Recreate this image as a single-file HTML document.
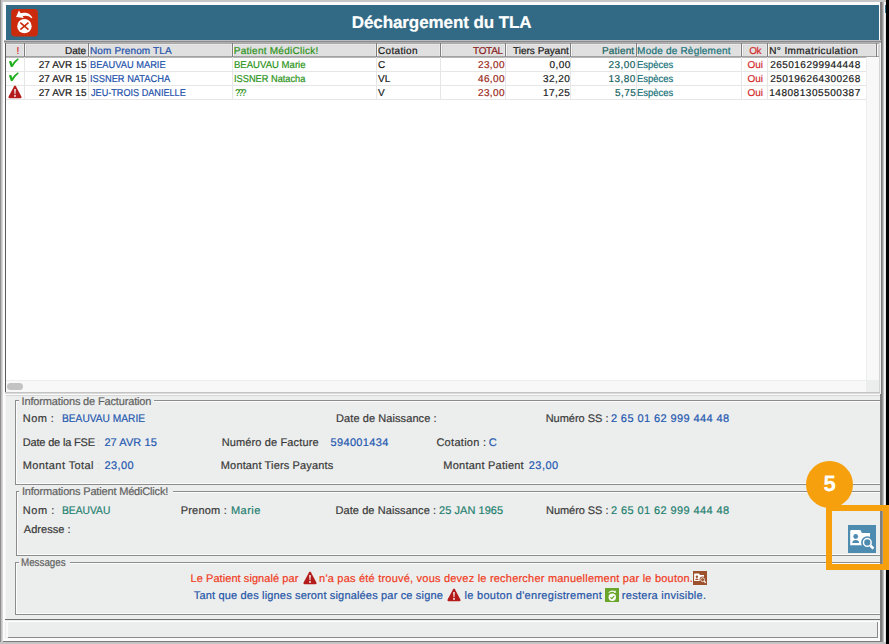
<!DOCTYPE html>
<html><head><meta charset="utf-8">
<style>
*{margin:0;padding:0;box-sizing:border-box}
html,body{width:889px;height:644px;overflow:hidden;background:#000}
body{position:relative;font-family:"Liberation Sans",sans-serif}
.a{position:absolute}
.t{position:absolute;white-space:pre;line-height:1;font-family:"Liberation Sans",sans-serif;-webkit-text-stroke:0.2px currentColor;text-rendering:geometricPrecision}
</style></head><body>
<!-- window frame -->
<div class="a" style="left:0;top:0;width:886px;height:644px;background:#c6c6c6"></div>
<div class="a" style="left:0;top:0;width:1px;height:644px;background:#8e8e8e"></div>
<div class="a" style="left:1px;top:0;width:1px;height:644px;background:#c2c2c2"></div>
<div class="a" style="left:2px;top:2px;width:883px;height:640px;background:#fbfbfb"></div>
<div class="a" style="left:2px;top:2px;width:1px;height:640px;background:#d6d6d6"></div>
<div class="a" style="left:880px;top:2px;width:1px;height:640px;background:#808080"></div>
<div class="a" style="left:881px;top:2px;width:1px;height:640px;background:#7c7c7c"></div>
<div class="a" style="left:882px;top:2px;width:1px;height:640px;background:#9a9a9a"></div>
<div class="a" style="left:883px;top:2px;width:1px;height:640px;background:#c0c0c0"></div>
<div class="a" style="left:884px;top:2px;width:1px;height:640px;background:#f4f4f4"></div>
<div class="a" style="left:885px;top:2px;width:1px;height:640px;background:#e4e4e4"></div>
<div class="a" style="left:885px;top:5px;width:1px;height:8px;background:#3a6f88"></div>
<!-- header -->
<div class="a" style="left:6px;top:5px;width:873px;height:35px;background:#326a85"></div>
<div class="a" style="left:4px;top:40px;width:877px;height:1px;background:#babec2"></div>
<div class="a" style="left:4px;top:41px;width:877px;height:1px;background:#8a8a8a"></div>
<div class="a" style="left:4px;top:42px;width:877px;height:1px;background:#b0b0b0"></div>
<!-- red icon -->
<svg class="a" style="left:10px;top:8px" width="30" height="30" viewBox="0 0 30 30">
 <rect x="1.2" y="0.9" width="26.7" height="27.5" rx="3.6" fill="#cb2a0c"/>
 <circle cx="14.45" cy="18.15" r="7.2" fill="#fff"/>
 <path d="M10.3 14.7 L18.5 21.7 M18.5 14.7 L10.3 21.7" stroke="#cb2a0c" stroke-width="1.6"/>
 <path d="M8.9 2.5 L6.1 8.9 L13.8 9.9 Z" fill="#fff"/>
 <path d="M9.8 5.6 C14 4.2 19.8 4.4 22.4 9.9 L21.6 10.3 C18.6 7.4 14.5 7.2 11.5 8.8 Z" fill="#fff"/>
</svg>
<!-- list box -->
<div class="a" style="left:5px;top:43px;width:875px;height:350px;background:#b8b8b8"></div>
<div class="a" style="left:5px;top:43px;width:1px;height:350px;background:#5a5a5a"></div>
<div class="a" style="left:6px;top:43px;width:873px;height:349px;background:#fff"></div>
<!-- table header -->
<div class="a" style="left:6px;top:43px;width:873px;height:1px;background:#a8a8a8"></div>
<div class="a" style="left:6px;top:44px;width:873px;height:1px;background:#eaeaea"></div>
<div class="a" style="left:6px;top:45px;width:873px;height:11px;background:#e0e0e0"></div>
<div class="a" style="left:6px;top:45px;width:873px;height:1px;background:#dcdcdc"></div>
<div class="a" style="left:6px;top:56px;width:873px;height:1px;background:#a2a2a2"></div>
<div class="a" style="left:6px;top:57px;width:873px;height:1px;background:#b8b8b8"></div>
<div class="a" style="left:24px;top:43px;width:1px;height:14px;background:#7e7e7e"></div>
<div class="a" style="left:25px;top:44px;width:1px;height:12px;background:#f8f8f8"></div>
<div class="a" style="left:26px;top:45px;width:1px;height:11px;background:#d4d4d4"></div>
<div class="a" style="left:23px;top:45px;width:1px;height:11px;background:#e8e8e8"></div>
<div class="a" style="left:88px;top:43px;width:1px;height:14px;background:#7e7e7e"></div>
<div class="a" style="left:89px;top:44px;width:1px;height:12px;background:#f8f8f8"></div>
<div class="a" style="left:90px;top:45px;width:1px;height:11px;background:#d4d4d4"></div>
<div class="a" style="left:87px;top:45px;width:1px;height:11px;background:#e8e8e8"></div>
<div class="a" style="left:232px;top:43px;width:1px;height:14px;background:#7e7e7e"></div>
<div class="a" style="left:233px;top:44px;width:1px;height:12px;background:#f8f8f8"></div>
<div class="a" style="left:234px;top:45px;width:1px;height:11px;background:#d4d4d4"></div>
<div class="a" style="left:231px;top:45px;width:1px;height:11px;background:#e8e8e8"></div>
<div class="a" style="left:376px;top:43px;width:1px;height:14px;background:#7e7e7e"></div>
<div class="a" style="left:377px;top:44px;width:1px;height:12px;background:#f8f8f8"></div>
<div class="a" style="left:378px;top:45px;width:1px;height:11px;background:#d4d4d4"></div>
<div class="a" style="left:375px;top:45px;width:1px;height:11px;background:#e8e8e8"></div>
<div class="a" style="left:440px;top:43px;width:1px;height:14px;background:#7e7e7e"></div>
<div class="a" style="left:441px;top:44px;width:1px;height:12px;background:#f8f8f8"></div>
<div class="a" style="left:442px;top:45px;width:1px;height:11px;background:#d4d4d4"></div>
<div class="a" style="left:439px;top:45px;width:1px;height:11px;background:#e8e8e8"></div>
<div class="a" style="left:505px;top:43px;width:1px;height:14px;background:#7e7e7e"></div>
<div class="a" style="left:506px;top:44px;width:1px;height:12px;background:#f8f8f8"></div>
<div class="a" style="left:507px;top:45px;width:1px;height:11px;background:#d4d4d4"></div>
<div class="a" style="left:504px;top:45px;width:1px;height:11px;background:#e8e8e8"></div>
<div class="a" style="left:570px;top:43px;width:1px;height:14px;background:#7e7e7e"></div>
<div class="a" style="left:571px;top:44px;width:1px;height:12px;background:#f8f8f8"></div>
<div class="a" style="left:572px;top:45px;width:1px;height:11px;background:#d4d4d4"></div>
<div class="a" style="left:569px;top:45px;width:1px;height:11px;background:#e8e8e8"></div>
<div class="a" style="left:636px;top:43px;width:1px;height:14px;background:#7e7e7e"></div>
<div class="a" style="left:637px;top:44px;width:1px;height:12px;background:#f8f8f8"></div>
<div class="a" style="left:638px;top:45px;width:1px;height:11px;background:#d4d4d4"></div>
<div class="a" style="left:635px;top:45px;width:1px;height:11px;background:#e8e8e8"></div>
<div class="a" style="left:741px;top:43px;width:1px;height:14px;background:#7e7e7e"></div>
<div class="a" style="left:742px;top:44px;width:1px;height:12px;background:#f8f8f8"></div>
<div class="a" style="left:743px;top:45px;width:1px;height:11px;background:#d4d4d4"></div>
<div class="a" style="left:740px;top:45px;width:1px;height:11px;background:#e8e8e8"></div>
<div class="a" style="left:767px;top:43px;width:1px;height:14px;background:#7e7e7e"></div>
<div class="a" style="left:768px;top:44px;width:1px;height:12px;background:#f8f8f8"></div>
<div class="a" style="left:769px;top:45px;width:1px;height:11px;background:#d4d4d4"></div>
<div class="a" style="left:766px;top:45px;width:1px;height:11px;background:#e8e8e8"></div>
<div class="a" style="left:876px;top:43px;width:1px;height:14px;background:#7e7e7e"></div>
<div class="a" style="left:877px;top:44px;width:1px;height:12px;background:#f8f8f8"></div>
<div class="a" style="left:878px;top:45px;width:1px;height:11px;background:#d4d4d4"></div>
<div class="a" style="left:875px;top:45px;width:1px;height:11px;background:#e8e8e8"></div>
<!-- rows separators -->
<div class="a" style="left:6px;top:71px;width:860px;height:1px;background:#e6e6e6"></div>
<div class="a" style="left:6px;top:85px;width:860px;height:1px;background:#e6e6e6"></div>
<div class="a" style="left:6px;top:99px;width:860px;height:1px;background:#e6e6e6"></div>
<div class="a" style="left:24px;top:57px;width:1px;height:43px;background:#e6e6e6"></div>
<div class="a" style="left:88px;top:57px;width:1px;height:43px;background:#e6e6e6"></div>
<div class="a" style="left:232px;top:57px;width:1px;height:43px;background:#e6e6e6"></div>
<div class="a" style="left:376px;top:57px;width:1px;height:43px;background:#e6e6e6"></div>
<div class="a" style="left:440px;top:57px;width:1px;height:43px;background:#e6e6e6"></div>
<div class="a" style="left:505px;top:57px;width:1px;height:43px;background:#e6e6e6"></div>
<div class="a" style="left:570px;top:57px;width:1px;height:43px;background:#e6e6e6"></div>
<div class="a" style="left:636px;top:57px;width:1px;height:43px;background:#e6e6e6"></div>
<div class="a" style="left:741px;top:57px;width:1px;height:43px;background:#e6e6e6"></div>
<div class="a" style="left:767px;top:57px;width:1px;height:43px;background:#e6e6e6"></div>
<!-- scroll tracks -->
<div class="a" style="left:866px;top:57px;width:13px;height:323px;background:#f8f8f8"></div>
<div class="a" style="left:866px;top:57px;width:1px;height:323px;background:#eceeed"></div>
<div class="a" style="left:6px;top:380px;width:860px;height:12px;background:#f8f8f8"></div>
<div class="a" style="left:6px;top:380px;width:860px;height:1px;background:#eceeed"></div>
<div class="a" style="left:866px;top:380px;width:13px;height:12px;background:#eceeed"></div>
<div class="a" style="left:7px;top:383px;width:15.5px;height:7px;border-radius:3.5px;background:#c3c3c3"></div>
<div class="a" style="left:879px;top:43px;width:1px;height:350px;background:#d4d4d4"></div>
<div class="a" style="left:880px;top:43px;width:1px;height:351px;background:#f0f0f0"></div>
<div class="a" style="left:5px;top:392px;width:875px;height:1px;background:#c4c4c4"></div>
<div class="a" style="left:5px;top:393px;width:875px;height:1px;background:#dadada"></div>
<!-- info panel -->
<div class="a" style="left:5px;top:395px;width:875px;height:225px;background:#eceeed"></div>
<div class="a" style="left:5px;top:395px;width:875px;height:1px;background:#d6d6d6"></div>
<div class="a" style="left:5px;top:395px;width:1px;height:225px;background:#f6f6f6"></div>
<div class="a" style="left:5px;top:619px;width:875px;height:1px;background:#737373"></div>
<div class="a" style="left:15px;top:400px;width:4px;height:1px;background:#8c8c8c"></div>
<div class="a" style="left:154px;top:400px;width:726px;height:1px;background:#8c8c8c"></div>
<div class="a" style="left:16px;top:401px;width:3px;height:1px;background:#fcfcfc"></div>
<div class="a" style="left:154px;top:401px;width:726px;height:1px;background:#fcfcfc"></div>
<div class="a" style="left:15px;top:400px;width:1px;height:85px;background:#8c8c8c"></div>
<div class="a" style="left:16px;top:401px;width:1px;height:83px;background:#fcfcfc"></div>
<div class="a" style="left:16px;top:483px;width:864px;height:1px;background:#fcfcfc"></div>
<div class="a" style="left:15px;top:484px;width:865px;height:1px;background:#8c8c8c"></div>
<div class="a" style="left:16px;top:491px;width:3px;height:1px;background:#8c8c8c"></div>
<div class="a" style="left:173px;top:491px;width:707px;height:1px;background:#8c8c8c"></div>
<div class="a" style="left:17px;top:492px;width:2px;height:1px;background:#fcfcfc"></div>
<div class="a" style="left:173px;top:492px;width:707px;height:1px;background:#fcfcfc"></div>
<div class="a" style="left:16px;top:491px;width:1px;height:65px;background:#8c8c8c"></div>
<div class="a" style="left:17px;top:492px;width:1px;height:63px;background:#fcfcfc"></div>
<div class="a" style="left:17px;top:554px;width:863px;height:1px;background:#fcfcfc"></div>
<div class="a" style="left:16px;top:555px;width:864px;height:1px;background:#8c8c8c"></div>
<div class="a" style="left:15px;top:562px;width:4px;height:1px;background:#8c8c8c"></div>
<div class="a" style="left:70px;top:562px;width:810px;height:1px;background:#8c8c8c"></div>
<div class="a" style="left:16px;top:563px;width:3px;height:1px;background:#fcfcfc"></div>
<div class="a" style="left:70px;top:563px;width:810px;height:1px;background:#fcfcfc"></div>
<div class="a" style="left:15px;top:562px;width:1px;height:53px;background:#8c8c8c"></div>
<div class="a" style="left:16px;top:563px;width:1px;height:51px;background:#fcfcfc"></div>
<div class="a" style="left:16px;top:613px;width:864px;height:1px;background:#fcfcfc"></div>
<div class="a" style="left:15px;top:614px;width:865px;height:1px;background:#8c8c8c"></div>
<!-- status bar -->
<div class="a" style="left:5px;top:620px;width:875px;height:21px;background:#eceeed"></div>
<div class="a" style="left:5px;top:621px;width:875px;height:1px;background:#fdfdfd"></div>
<div class="a" style="left:6px;top:621px;width:2px;height:16px;background:#fafafa"></div>
<div class="a" style="left:8px;top:637px;width:870px;height:1px;background:#8a8a8a"></div>
<div class="a" style="left:877px;top:622px;width:1px;height:16px;background:#8a8a8a"></div>
<div class="a" style="left:878px;top:621px;width:2px;height:20px;background:#fbfbfb"></div>
<div class="a" style="left:5px;top:638px;width:875px;height:3px;background:#fbfbfb"></div>
<div class="a" style="left:3px;top:641px;width:878px;height:1px;background:#7a7a7a"></div>
<div class="a" style="left:0;top:642px;width:886px;height:2px;background:#c4c4c4"></div>
<!-- icons in table -->
<svg class="a" style="left:8px;top:58px" width="12" height="10" viewBox="0 0 12 10"><path d="M0.9 3.5 Q2.3 2.6 3.5 3.2 L4.1 5.9 Q6.6 2.4 9.9 0.2 L10.8 1.3 Q7.4 4.3 4.8 8.8 L2.9 9.2 Z" fill="#1fb01f"/></svg>
<svg class="a" style="left:8px;top:72px" width="12" height="10" viewBox="0 0 12 10"><path d="M0.9 3.5 Q2.3 2.6 3.5 3.2 L4.1 5.9 Q6.6 2.4 9.9 0.2 L10.8 1.3 Q7.4 4.3 4.8 8.8 L2.9 9.2 Z" fill="#1fb01f"/></svg>
<svg class="a" style="left:8px;top:85px" width="14" height="14" viewBox="0 0 14 14"><path d="M6.1 1.2 Q7 -0.2 7.9 1.2 L13.4 11.4 Q14 13.2 12.3 13.2 L1.7 13.2 Q0 13.2 0.6 11.4 Z" fill="#b41b1b"/><path d="M6.2 4.3 Q7 3.8 7.8 4.3 L7.4 9.2 L6.6 9.2 Z" fill="#fff"/><circle cx="7" cy="10.9" r="0.95" fill="#fff"/></svg>
<!-- texts -->
<span class="t" style="top:46.53px;font-size:10px;color:#d42a2a;left:16.50px;">!</span>
<span class="t" style="top:46.53px;font-size:10px;color:#1a1a1a;left:65.00px;">Date</span>
<span class="t" style="top:46.53px;font-size:10px;color:#2251ab;letter-spacing:0.154px;left:89.90px;">Nom Prenom TLA</span>
<span class="t" style="top:46.53px;font-size:10px;color:#2c9419;letter-spacing:0.259px;left:233.80px;">Patient MédiClick!</span>
<span class="t" style="top:46.53px;font-size:10px;color:#1a1a1a;letter-spacing:0.300px;left:378.10px;">Cotation</span>
<span class="t" style="top:46.53px;font-size:10px;color:#8a1c1c;letter-spacing:-0.300px;left:473.00px;">TOTAL</span>
<span class="t" style="top:46.53px;font-size:10px;color:#1a1a1a;left:513.00px;">Tiers Payant</span>
<span class="t" style="top:46.53px;font-size:10px;color:#17625f;letter-spacing:0.167px;left:602.00px;">Patient</span>
<span class="t" style="top:46.53px;font-size:10px;color:#157078;letter-spacing:0.206px;left:637.10px;">Mode de Règlement</span>
<span class="t" style="top:46.53px;font-size:10px;color:#d42a2a;letter-spacing:-0.400px;left:749.20px;">Ok</span>
<span class="t" style="top:46.53px;font-size:10px;color:#1a1a1a;letter-spacing:0.400px;left:769.20px;">N° Immatriculation</span>
<span class="t" style="top:60.53px;font-size:10px;color:#1a1a1a;letter-spacing:0.088px;left:38.70px;">27 AVR 15</span>
<span class="t" style="top:60.53px;font-size:10px;color:#2251ab;transform:scaleX(0.9275);transform-origin:0 0;left:89.97px;">BEAUVAU MARIE</span>
<span class="t" style="top:60.53px;font-size:10px;color:#2c9419;transform:scaleX(0.9554);transform-origin:0 0;left:233.84px;">BEAUVAU Marie</span>
<span class="t" style="top:60.53px;font-size:10px;color:#1a1a1a;left:378.10px;">C</span>
<span class="t" style="top:60.53px;font-size:10px;color:#9a2818;letter-spacing:0.420px;left:477.92px;">23,00</span>
<span class="t" style="top:60.53px;font-size:10px;color:#1a1a1a;letter-spacing:0.420px;left:549.54px;">0,00</span>
<span class="t" style="top:60.53px;font-size:10px;color:#17625f;letter-spacing:0.420px;left:608.62px;">23,00</span>
<span class="t" style="top:60.53px;font-size:10px;color:#157078;transform:scaleX(0.9432);transform-origin:0 0;left:637.16px;">Espèces</span>
<span class="t" style="top:60.53px;font-size:10px;color:#d42a2a;left:747.50px;">Oui</span>
<span class="t" style="top:60.53px;font-size:10px;color:#1a1a1a;letter-spacing:0.471px;left:770.20px;">265016299944448</span>
<span class="t" style="top:74.53px;font-size:10px;color:#1a1a1a;letter-spacing:0.088px;left:38.70px;">27 AVR 15</span>
<span class="t" style="top:74.53px;font-size:10px;color:#2251ab;transform:scaleX(0.9279);transform-origin:0 0;left:89.97px;">ISSNER NATACHA</span>
<span class="t" style="top:74.53px;font-size:10px;color:#2c9419;transform:scaleX(0.9237);transform-origin:0 0;left:233.88px;">ISSNER Natacha</span>
<span class="t" style="top:74.53px;font-size:10px;color:#1a1a1a;left:378.10px;">VL</span>
<span class="t" style="top:74.53px;font-size:10px;color:#9a2818;letter-spacing:0.420px;left:477.92px;">46,00</span>
<span class="t" style="top:74.53px;font-size:10px;color:#1a1a1a;letter-spacing:0.420px;left:543.12px;">32,20</span>
<span class="t" style="top:74.53px;font-size:10px;color:#17625f;letter-spacing:0.420px;left:608.62px;">13,80</span>
<span class="t" style="top:74.53px;font-size:10px;color:#157078;transform:scaleX(0.9432);transform-origin:0 0;left:637.16px;">Espèces</span>
<span class="t" style="top:74.53px;font-size:10px;color:#d42a2a;left:747.50px;">Oui</span>
<span class="t" style="top:74.53px;font-size:10px;color:#1a1a1a;letter-spacing:0.471px;left:770.20px;">250196264300268</span>
<span class="t" style="top:88.53px;font-size:10px;color:#1a1a1a;letter-spacing:0.088px;left:38.70px;">27 AVR 15</span>
<span class="t" style="top:88.53px;font-size:10px;color:#2251ab;transform:scaleX(0.9115);transform-origin:0 0;left:90.90px;">JEU-TROIS DANIELLE</span>
<span class="t" style="top:88.53px;font-size:10px;color:#2c9419;letter-spacing:-1.920px;transform:scaleX(0.8800);transform-origin:0 0;left:234.80px;">???</span>
<span class="t" style="top:88.53px;font-size:10px;color:#1a1a1a;left:378.10px;">V</span>
<span class="t" style="top:88.53px;font-size:10px;color:#9a2818;letter-spacing:0.420px;left:477.92px;">23,00</span>
<span class="t" style="top:88.53px;font-size:10px;color:#1a1a1a;letter-spacing:0.420px;left:543.12px;">17,25</span>
<span class="t" style="top:88.53px;font-size:10px;color:#17625f;letter-spacing:0.420px;left:615.04px;">5,75</span>
<span class="t" style="top:88.53px;font-size:10px;color:#157078;transform:scaleX(0.9432);transform-origin:0 0;left:637.16px;">Espèces</span>
<span class="t" style="top:88.53px;font-size:10px;color:#d42a2a;left:747.50px;">Oui</span>
<span class="t" style="top:88.53px;font-size:10px;color:#1a1a1a;letter-spacing:0.543px;left:769.20px;">148081305500387</span>
<span class="t" style="top:396.69px;font-size:11px;color:#626262;letter-spacing:-0.158px;left:21.60px;">Informations de Facturation</span>
<span class="t" style="top:413.69px;font-size:11px;color:#3a3a3a;letter-spacing:0.425px;left:22.80px;">Nom :</span>
<span class="t" style="top:413.69px;font-size:11px;color:#2458b0;transform:scaleX(0.9261);transform-origin:0 0;left:62.47px;">BEAUVAU MARIE</span>
<span class="t" style="top:413.69px;font-size:11px;color:#3a3a3a;letter-spacing:0.078px;left:336.10px;">Date de Naissance :</span>
<span class="t" style="top:413.69px;font-size:11px;color:#3a3a3a;letter-spacing:-0.020px;left:545.70px;">Numéro SS :</span>
<span class="t" style="top:413.69px;font-size:11px;color:#2458b0;letter-spacing:0.405px;left:610.90px;">2 65 01 62 999 444 48</span>
<span class="t" style="top:437.69px;font-size:11px;color:#3a3a3a;letter-spacing:-0.169px;left:22.70px;">Date de la FSE</span>
<span class="t" style="top:437.69px;font-size:11px;color:#e6dccb;left:97.00px;">:</span>
<span class="t" style="top:437.69px;font-size:11px;color:#2458b0;letter-spacing:0.075px;left:104.40px;">27 AVR 15</span>
<span class="t" style="top:437.69px;font-size:11px;color:#3a3a3a;letter-spacing:0.131px;left:221.70px;">Numéro de Facture</span>
<span class="t" style="top:437.69px;font-size:11px;color:#2458b0;letter-spacing:0.325px;left:330.60px;">594001434</span>
<span class="t" style="top:437.69px;font-size:11px;color:#3a3a3a;letter-spacing:0.289px;left:436.40px;">Cotation :</span>
<span class="t" style="top:437.69px;font-size:11px;color:#2458b0;left:488.70px;">C</span>
<span class="t" style="top:460.69px;font-size:11px;color:#3a3a3a;letter-spacing:0.417px;left:22.70px;">Montant Total</span>
<span class="t" style="top:460.69px;font-size:11px;color:#e6dccb;left:97.00px;">:</span>
<span class="t" style="top:460.69px;font-size:11px;color:#2458b0;letter-spacing:0.400px;left:104.40px;">23,00</span>
<span class="t" style="top:460.69px;font-size:11px;color:#3a3a3a;letter-spacing:0.150px;left:220.80px;">Montant Tiers Payants</span>
<span class="t" style="top:460.69px;font-size:11px;color:#3a3a3a;letter-spacing:0.236px;left:443.30px;">Montant Patient</span>
<span class="t" style="top:460.69px;font-size:11px;color:#2458b0;letter-spacing:0.500px;left:528.70px;">23,00</span>
<span class="t" style="top:487.29px;font-size:11px;color:#626262;letter-spacing:-0.173px;left:21.90px;">Informations Patient MédiClick!</span>
<span class="t" style="top:505.69px;font-size:11px;color:#3a3a3a;letter-spacing:0.525px;left:22.80px;">Nom :</span>
<span class="t" style="top:505.69px;font-size:11px;color:#1f8070;transform:scaleX(0.9340);transform-origin:0 0;left:62.37px;">BEAUVAU</span>
<span class="t" style="top:505.69px;font-size:11px;color:#3a3a3a;letter-spacing:0.214px;left:180.70px;">Prenom :</span>
<span class="t" style="top:505.69px;font-size:11px;color:#1f8070;letter-spacing:0.450px;left:231.00px;">Marie</span>
<span class="t" style="top:505.69px;font-size:11px;color:#3a3a3a;letter-spacing:0.089px;left:335.40px;">Date de Naissance :</span>
<span class="t" style="top:505.69px;font-size:11px;color:#1f8070;letter-spacing:0.050px;left:439.00px;">25 JAN 1965</span>
<span class="t" style="top:505.69px;font-size:11px;color:#3a3a3a;letter-spacing:-0.050px;left:546.00px;">Numéro SS :</span>
<span class="t" style="top:505.69px;font-size:11px;color:#1f8070;letter-spacing:0.400px;left:611.00px;">2 65 01 62 999 444 48</span>
<span class="t" style="top:524.59px;font-size:11px;color:#3a3a3a;letter-spacing:0.025px;left:23.80px;">Adresse :</span>
<span class="t" style="top:558.29px;font-size:11px;color:#626262;transform:scaleX(0.8898);transform-origin:0 0;left:21.31px;">Messages</span>
<span class="t" style="top:573.59px;font-size:11px;color:#f03c1e;letter-spacing:0.067px;left:190.50px;">Le Patient signalé par</span>
<span class="t" style="top:573.59px;font-size:11px;color:#f03c1e;letter-spacing:0.214px;left:319.10px;">n&#x27;a pas été trouvé, vous devez le rechercher manuellement par le bouton.</span>
<span class="t" style="top:590.69px;font-size:11px;color:#2656a8;letter-spacing:0.169px;left:193.80px;">Tant que des lignes seront signalées par ce signe</span>
<span class="t" style="top:590.69px;font-size:11px;color:#2656a8;letter-spacing:0.296px;left:464.50px;">le bouton d&#x27;enregistrement</span>
<span class="t" style="top:590.69px;font-size:11px;color:#2656a8;letter-spacing:0.276px;left:621.80px;">restera invisible.</span>
<span class="t" style="top:13.81px;font-size:17px;color:#ffffff;font-weight:bold;letter-spacing:-0.078px;left:351.70px;">Déchargement du TLA</span>
<!-- message icons -->
<svg class="a" style="left:303px;top:571px" width="14" height="14" viewBox="0 0 14 14"><path d="M6.1 1.2 Q7 -0.2 7.9 1.2 L13.4 11.4 Q14 13.2 12.3 13.2 L1.7 13.2 Q0 13.2 0.6 11.4 Z" fill="#b41b1b"/><path d="M6.2 4.3 Q7 3.8 7.8 4.3 L7.4 9.2 L6.6 9.2 Z" fill="#fff"/><circle cx="7" cy="10.9" r="0.95" fill="#fff"/></svg>
<svg class="a" style="left:447px;top:588px" width="14" height="14" viewBox="0 0 14 14"><path d="M6.1 1.2 Q7 -0.2 7.9 1.2 L13.4 11.4 Q14 13.2 12.3 13.2 L1.7 13.2 Q0 13.2 0.6 11.4 Z" fill="#b41b1b"/><path d="M6.2 4.3 Q7 3.8 7.8 4.3 L7.4 9.2 L6.6 9.2 Z" fill="#fff"/><circle cx="7" cy="10.9" r="0.95" fill="#fff"/></svg>
<svg class="a" style="left:693px;top:571px" width="14" height="14" viewBox="0 0 28 28">
<rect width="28" height="28" fill="#9c522c"/>
<path d="M2.2 6.3 Q2.2 5 3.5 5 L11.6 5 Q12.6 5 13 6 L13.8 8 L22 8 L22 20.2 L2.2 20.2 Z" fill="#fff"/>
<circle cx="7.7" cy="11.5" r="2.4" fill="#9c522c"/>
<path d="M4.2 18 Q4.4 14.9 7.7 14.9 Q11 14.9 11.2 18 Z" fill="#9c522c"/>
<circle cx="19.3" cy="17.4" r="6.2" fill="#9c522c"/>
<circle cx="19.3" cy="17.4" r="3.85" fill="none" stroke="#fff" stroke-width="1.5"/>
<path d="M22.4 20.5 L25.4 23.6" stroke="#fff" stroke-width="2.6" stroke-linecap="butt"/>
</svg>
<svg class="a" style="left:605px;top:588px" width="14" height="14" viewBox="0 0 14 14">
<rect width="14" height="14" fill="#6ba62c"/>
<circle cx="7.3" cy="9.3" r="3.7" fill="#fff"/>
<path d="M5.4 9.3 L6.8 10.7 L9.3 7.9" stroke="#6ba62c" stroke-width="1.2" fill="none"/>
<path d="M3.2 5.2 C4.5 2.6 7.5 2 9.6 3.2 L9.9 2.1 L11.3 4.6 L8.7 5.1 L9.2 4.2 C7.4 3.3 5.2 3.8 3.2 5.2 Z" fill="#fff"/>
</svg>
<!-- annotation -->
<div class="a" style="left:806px;top:460.5px;width:47px;height:47px;border-radius:50%;background:#f5a00c"></div>
<div class="t" style="left:806px;top:473px;width:47px;text-align:center;font-size:22px;font-weight:bold;color:#fff">5</div>
<svg class="a" style="left:848px;top:525px" width="28" height="28" viewBox="0 0 28 28">
<rect width="28" height="28" fill="#4e8bb0"/>
<path d="M2.2 6.3 Q2.2 5 3.5 5 L11.6 5 Q12.6 5 13 6 L13.8 8 L22 8 L22 20.2 L2.2 20.2 Z" fill="#fff"/>
<circle cx="7.7" cy="11.5" r="2.4" fill="#4e8bb0"/>
<path d="M4.2 18 Q4.4 14.9 7.7 14.9 Q11 14.9 11.2 18 Z" fill="#4e8bb0"/>
<circle cx="19.3" cy="17.4" r="6.2" fill="#4e8bb0"/>
<circle cx="19.3" cy="17.4" r="3.85" fill="none" stroke="#fff" stroke-width="1.5"/>
<path d="M22.4 20.5 L25.4 23.6" stroke="#fff" stroke-width="2.6" stroke-linecap="butt"/>
</svg>
<div class="a" style="left:826px;top:505px;width:63px;height:65px;border:6px solid #f5a00c"></div>
</body></html>
